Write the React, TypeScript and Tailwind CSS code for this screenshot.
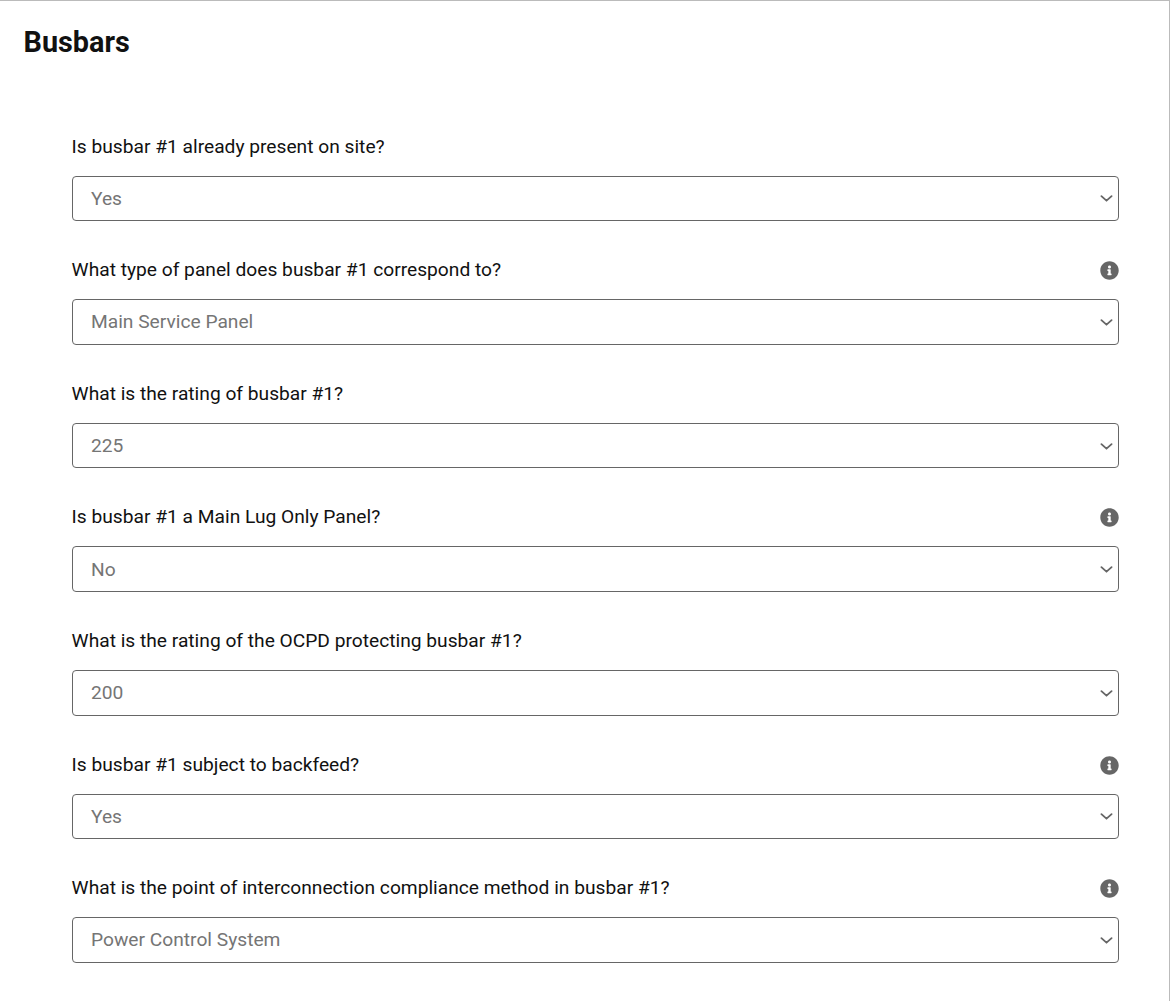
import React from 'react';
import { FaInfoCircle } from 'react-icons/fa';

interface Question {
  id: string;
  label: string;
  value: string;
  hasInfo?: boolean;
}

const questions: Question[] = [
  { id: 'present', label: 'Is busbar #1 already present on site?', value: 'Yes' },
  { id: 'panel-type', label: 'What type of panel does busbar #1 correspond to?', value: 'Main Service Panel', hasInfo: true },
  { id: 'rating', label: 'What is the rating of busbar #1?', value: '225' },
  { id: 'main-lug', label: 'Is busbar #1 a Main Lug Only Panel?', value: 'No', hasInfo: true },
  { id: 'ocpd-rating', label: 'What is the rating of the OCPD protecting busbar #1?', value: '200' },
  { id: 'backfeed', label: 'Is busbar #1 subject to backfeed?', value: 'Yes', hasInfo: true },
  { id: 'compliance', label: 'What is the point of interconnection compliance method in busbar #1?', value: 'Power Control System', hasInfo: true },
];

function SelectField({ id, label, value, hasInfo }: Question) {
  return (
    <div className="h-[123.6px]">
      <div className="flex h-[30px] items-start justify-between">
        <label htmlFor={id} className="-ml-[0.4px] text-[19.2px] leading-[22px] text-[#111]">
          {label}
        </label>
        {hasInfo && <FaInfoCircle className="mt-[2px] h-[19px] w-[19px] text-[#666]" aria-hidden="true" />}
      </div>
      <button
        id={id}
        type="button"
        className="mt-[10px] flex h-[45.6px] w-full items-center justify-between rounded border border-[#666] bg-white pr-[5px] pl-[18px]"
      >
        <span className="pt-[0.7px] text-[19.2px] leading-[22px] text-[#757575]">{value}</span>
        <svg
          className="h-[14px] w-[14px]"
          viewBox="0 0 14 14"
          fill="none"
          stroke="#666"
          strokeWidth="1.8"
          strokeLinecap="round"
          strokeLinejoin="round"
          aria-hidden="true"
        >
          <path d="M2.4 5.1 7.5 9.7 12.6 5.1" />
        </svg>
      </button>
    </div>
  );
}

export default function App() {
  return (
    <main className="h-[1001px] w-[1170px] overflow-hidden border-t border-r border-[#bbb] bg-white pl-6 font-['Roboto',sans-serif]">
      <h1 className="-ml-[0.5px] pt-[24px] text-[28.8px] leading-[34px] font-bold text-[#111]">Busbars</h1>
      <form className="mt-[76.6px] mr-[50px] ml-12">
        {questions.map((question) => (
          <SelectField key={question.id} {...question} />
        ))}
      </form>
    </main>
  );
}
